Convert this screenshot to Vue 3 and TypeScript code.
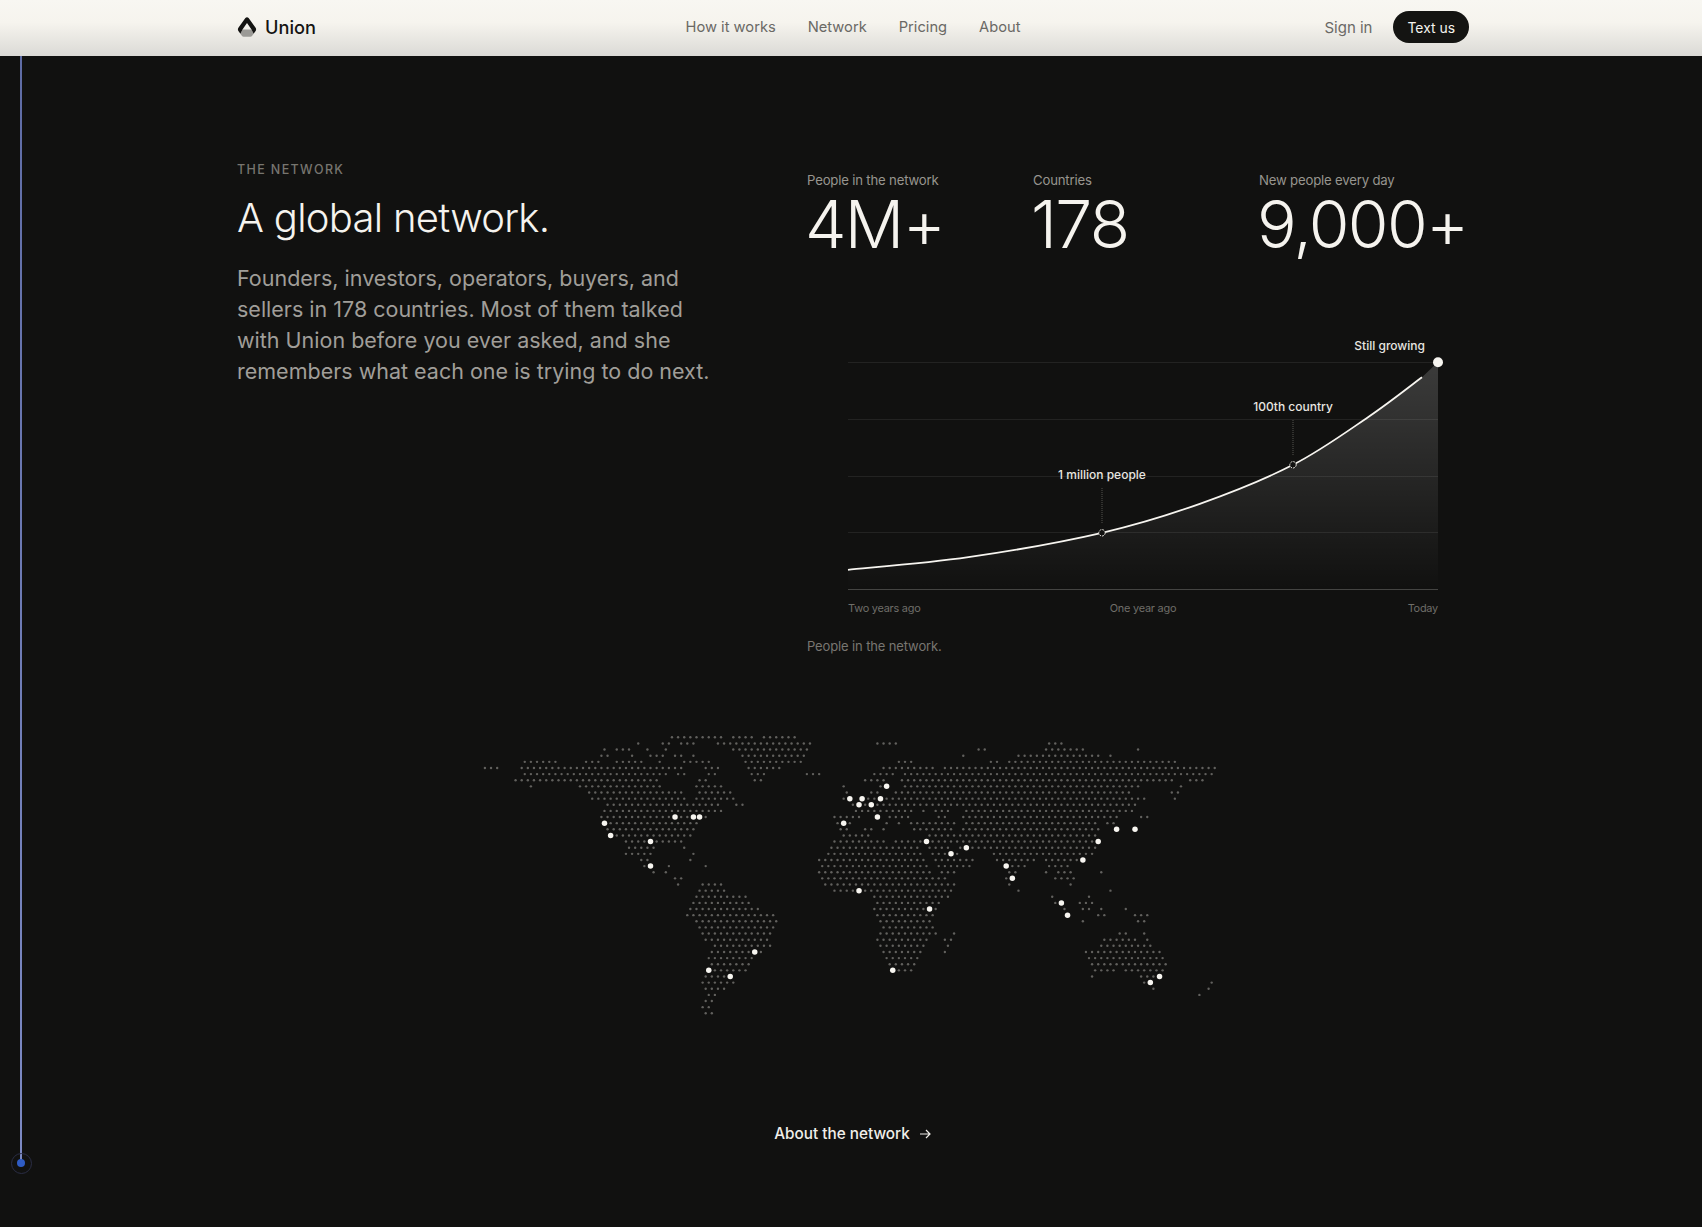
<script setup lang="ts">
const SP = 6.133
const X0 = 521.7
const Y0 = 737.3

type Run = number | [number, number]

// Land outline: runs of dots per grid row, measured in two overlapping strips.
const west: Run[][] = [
  [[605, 755], [788, 845], [880, 975]],
  [505, [578, 597], [633, 670], [745, 1020]],
  [403, [440, 477], 532, 587, [790, 1010]],
  [[393, 412], 487, [540, 578], [615, 633], 670, [815, 1005]],
  [[165, 257], [347, 385], [440, 513], 570, [642, 715], [825, 993]],
  [[45, 82], [155, 632], [706, 743], [835, 928]],
  [[165, 587], [625, 642], [715, 735], [845, 880]],
  [[137, 560], [688, 706], [853, 872]],
  [183, [330, 570], [680, 752]],
  [[357, 632], [680, 780]],
  [[365, 642], [680, 790]],
  [[412, 743], [797, 818]],
  [[403, 752]],
  [[393, 706]],
  [[403, 680]],
  [[412, 670]],
  [[422, 660]],
  [[467, 633]],
  [[477, 550], 642],
  [[467, 540], 670],
  [[513, 532], 660],
  [[523, 541], 597, 706],
  [550, 587],
  [[615, 633]],
  [625, [697, 752]],
  [[688, 770]],
  [[680, 825]],
  [[670, 835]],
  [[660, 862]],
  [[652, 910]],
  [[680, 920]],
  [[688, 910]],
  [[697, 900]],
  [[706, 890]],
  [[733, 900]],
  [[725, 872]],
  [[715, 845]],
  [[725, 835]],
  [[715, 825]],
  [[706, 780]],
  [[697, 790]],
  [[706, 762]],
  [[715, 735]],
  [[706, 725]],
  [[697, 715]],
  [[706, 725]],
]

const east: Run[][] = [
  [],
  [[12, 30], [232, 287], [748, 785]],
  [[0, 20], [535, 553], [738, 850], 1015],
  [12, 490, [655, 895], 932],
  [3, [297, 333], [572, 590], [628, 1125]],
  [[250, 397], [435, 1245]],
  [[20, 57], [223, 280], [315, 1235]],
  [[195, 250], [305, 1115], [1170, 1207]],
  [130, [242, 260], [315, 1015], 1143],
  [140, [213, 232], [287, 988], [1115, 1133]],
  [[130, 150], 186, [205, 1033], 1125],
  [[160, 1005]],
  [[168, 335], 370, [408, 445], [500, 995]],
  [[103, 177], 232, [270, 325], [415, 435], [490, 950], [1022, 1040]],
  [[112, 150], 260, 297, [335, 463], [500, 885], [922, 940]],
  [[122, 140], [195, 213], 250, [342, 460], [490, 895], 950, 1005],
  [[130, 205], [390, 890]],
  [[103, 250], [287, 380], [400, 895]],
  [[93, 352], [390, 445], [480, 885]],
  [[85, 362], [400, 472], [583, 880]],
  [[57, 370], [408, 518], [590, 705], [740, 850]],
  [[67, 380], [415, 510], [620, 675], [748, 805]],
  [[57, 390], [425, 462], [630, 648], 738, [775, 805], 905],
  [[67, 435], [620, 638], [767, 822]],
  [[75, 462], 630, 812],
  [[103, 455], 655, 932],
  [[223, 445], 757, 868],
  [[232, 418], [767, 785], [840, 877]],
  [[223, 410], 795, [850, 868], 905, 978],
  [[232, 400], 803, [895, 913], [1005, 1042]],
  [[240, 390], 850, [1015, 1033]],
  [[250, 400]],
  [[240, 408], 462, [960, 978], 1033],
  [[232, 380], [435, 453], [913, 1005], 1042],
  [[240, 372], 445, [905, 1050]],
  [[250, 362], 435, [858, 1080]],
  [[260, 353], [868, 1088]],
  [[268, 345], [877, 1098]],
  [[278, 335], [887, 942], [978, 1088]],
  [877, [1023, 1078]],
  [[1033, 1050], 1235],
  [1060, 1225],
  [1198],
]

const westHubs: [number, number][] = [
  [13, 615], [13, 670], [13, 688], [14, 403], [16, 422], [17, 541], [21, 541],
  [35, 853], [38, 716], [39, 780],
]
const eastHubs: [number, number][] = [
  [8, 260], [10, 150], [10, 186], [10, 241], [11, 177], [11, 213], [13, 232], [14, 131],
  [15, 950], [15, 1005], [17, 379], [17, 895], [18, 499], [19, 453], [20, 849], [21, 619],
  [23, 637], [25, 177], [27, 785], [28, 388], [29, 803], [38, 278], [39, 1078], [40, 1050],
]

const fromWest = (z: number) => 470 + z / 3
const fromEast = (z: number) => 800 + z / 3
const colOf = (x: number, r: number) => Math.round((x - X0) / SP - (r % 2 === 0 ? 0.5 : 0))
const xOf = (c: number, r: number) => X0 + SP * (c + (r % 2 === 0 ? 0.5 : 0))
const yOf = (r: number) => Y0 + SP * r

const seen = new Set<string>()
const dots: { x: number; y: number }[] = []
function addRuns(rows: Run[][], conv: (z: number) => number) {
  rows.forEach((runs, r) => {
    for (const run of runs) {
      const [a, b] = typeof run === 'number' ? [run, run] : run
      const c0 = colOf(conv(a), r)
      const c1 = colOf(conv(b), r)
      for (let c = c0; c <= c1; c++) {
        const k = `${r}:${c}`
        if (!seen.has(k)) {
          seen.add(k)
          dots.push({ x: xOf(c, r), y: yOf(r) })
        }
      }
    }
  })
}
addRuns(west, fromWest)
addRuns(east, fromEast)

const hubs = [
  ...westHubs.map(([r, z]) => ({ x: xOf(colOf(fromWest(z), r), r), y: yOf(r) })),
  ...eastHubs.map(([r, z]) => ({ x: xOf(colOf(fromEast(z), r), r), y: yOf(r) })),
]

// Growth curve, in page-relative chart coordinates.
const curve: [number, number][] = [
  [41, 255.8], [161.4, 243.2], [295, 218.8], [392.8, 189.8], [486, 150.8], [561, 103.2], [615, 63.2],
]
function smooth(pts: [number, number][]) {
  let d = `M${pts[0][0]} ${pts[0][1]}`
  for (let i = 0; i < pts.length - 1; i++) {
    const p0 = pts[Math.max(0, i - 1)]
    const p1 = pts[i]
    const p2 = pts[i + 1]
    const p3 = pts[Math.min(pts.length - 1, i + 2)]
    const c1x = p1[0] + (p2[0] - p0[0]) / 6
    const c1y = p1[1] + (p2[1] - p0[1]) / 6
    const c2x = p2[0] - (p3[0] - p1[0]) / 6
    const c2y = p2[1] - (p3[1] - p1[1]) / 6
    d += ` C${c1x.toFixed(1)} ${c1y.toFixed(1)} ${c2x.toFixed(1)} ${c2y.toFixed(1)} ${p2[0]} ${p2[1]}`
  }
  return d
}
const linePath = smooth(curve)
const areaPath = `${linePath} L631 48 L631 275.5 L41 275.5 Z`
const gridLines = [48.5, 105.5, 162.5, 218.5]
const stats = [
  { label: 'People in the network', value: '4M+' },
  { label: 'Countries', value: '178' },
  { label: 'New people every day', value: '9,000+' },
]
const links = ['How it works', 'Network', 'Pricing', 'About']
</script>

<template>
  <div class="page">
    <span class="rail" aria-hidden="true"><span class="rail-dot"></span></span>
    <header class="nav">
      <div class="nav-inner">
        <a class="brand">
          <svg class="logo" viewBox="0 0 20 20" width="20" height="20" aria-hidden="true">
            <path d="M5.500 12.500H14.500L16.600 16.800L15 19Q14.400 19.800 13.500 19.800H6.500Q5.600 19.800 5 19L3.400 16.800Z" fill="#9b9a96" />
            <path d="M8.400 1Q10 -.3 11.600 1L18.600 10.800Q19.600 12.400 18.600 14L16.600 16.800L14.500 12.500L10 6L5.500 12.500L3.400 16.800L1.400 14Q.4 12.400 1.400 10.800Z" fill="#141412" />
          </svg>
          <span>Union</span>
        </a>
        <nav class="links">
          <a v-for="l in links" :key="l">{{ l }}</a>
        </nav>
        <div class="actions">
          <a class="signin">Sign in</a>
          <a class="cta-pill">Text us</a>
        </div>
      </div>
    </header>

    <main class="main">
      <section class="split">
        <div class="intro">
          <p class="eyebrow">THE NETWORK</p>
          <h1>A global network.</h1>
          <p class="lede">Founders, investors, operators, buyers, and sellers in 178 countries. Most of them talked with Union before you ever asked, and she remembers what each one is trying to do next.</p>
        </div>
        <div class="data">
          <div class="stats">
            <div v-for="s in stats" :key="s.label" class="stat">
              <div class="stat-label">{{ s.label }}</div>
              <div class="stat-value">{{ s.value }}</div>
            </div>
          </div>
          <svg class="chart" viewBox="0 0 662 305" width="662" height="305">
            <defs>
              <linearGradient id="area" x1="0" y1="48" x2="0" y2="275" gradientUnits="userSpaceOnUse">
                <stop offset="0" stop-color="#fff" stop-opacity="0.18" />
                <stop offset="1" stop-color="#fff" stop-opacity="0" />
              </linearGradient>
            </defs>
            <line v-for="g in gridLines" :key="g" x1="41" x2="631" :y1="g" :y2="g" class="grid" />
            <path :d="areaPath" fill="url(#area)" />
            <line x1="41" x2="631" y1="275.500" y2="275.500" class="axis" />
            <path :d="linePath" class="line" />
            <line x1="295" x2="295" y1="174" y2="210" class="lead" />
            <line x1="486" x2="486" y1="106" y2="141" class="lead" />
            <circle cx="295" cy="218.800" r="3.200" class="pt" />
            <circle cx="486" cy="150.800" r="3.200" class="pt" />
            <circle cx="631" cy="48.300" r="5" fill="#f7f5f0" />
            <text x="295" y="165" text-anchor="middle" class="note">1 million people</text>
            <text x="486" y="97" text-anchor="middle" class="note">100th country</text>
            <text x="618" y="36" text-anchor="end" class="note">Still growing</text>
            <text x="41" y="297.500" class="tick">Two years ago</text>
            <text x="336" y="297.500" text-anchor="middle" class="tick">One year ago</text>
            <text x="631" y="297.500" text-anchor="end" class="tick">Today</text>
          </svg>
          <p class="caption">People in the network.</p>
        </div>
      </section>

      <svg class="map" viewBox="473 725 760 305" width="760" height="305" aria-hidden="true">
        <circle v-for="(d, i) in dots" :key="i" :cx="d.x" :cy="d.y" r="1.200" fill="#62615e" />
        <circle v-for="(h, i) in hubs" :key="'h' + i" :cx="h.x" :cy="h.y" r="2.750" fill="#f7f5f0" />
      </svg>

      <a class="about">
        <span>About the network</span>
        <svg viewBox="0 0 14 14" width="14" height="14" fill="none" stroke="currentColor" stroke-width="1.200" aria-hidden="true">
          <path d="M2 7h10M8 3l4 4-4 4" />
        </svg>
      </a>
    </main>
  </div>
</template>

<style>
html, body { margin: 0; background: #111110; }
</style>

<style scoped>
.page {
  position: relative;
  min-height: 1227px;
  background: #111110;
  font-family: Inter, "Liberation Sans", sans-serif;
  color: #f5f3ee;
  overflow: hidden;
}
a { text-decoration: none; }
.rail {
  position: absolute;
  left: 20px;
  top: 56px;
  width: 2px;
  height: 1107px;
  background: linear-gradient(#5f6ca5, #7d8ac4);
}
.rail-dot {
  position: absolute;
  left: -3px;
  bottom: -4px;
  width: 8px;
  height: 8px;
  border-radius: 50%;
  background: #2f5cc4;
}
.rail-dot::after {
  content: "";
  position: absolute;
  inset: -6.5px;
  border: 1px solid #2a2d45;
  border-radius: 50%;
}
.nav {
  height: 56px;
  background: linear-gradient(#f8f7f2 0%, #f6f4ee 40%, #dbdad6 100%);
}
.nav-inner {
  width: 1232px;
  height: 100%;
  box-sizing: border-box;
  padding-bottom: 2px;
  margin-left: 237px;
  display: grid;
  grid-template-columns: 1fr auto 1fr;
  align-items: center;
}
.brand {
  display: flex;
  align-items: center;
  gap: 8px;
  color: #141412;
  font-size: 18.200px;
  font-weight: 550;
}
.logo { display: block; }
.links {
  display: flex;
  gap: 32px;
  font-size: 14.700px;
  color: #6a6965;
}
.actions {
  display: flex;
  justify-content: flex-end;
  align-items: center;
  gap: 21px;
  font-size: 15px;
}
.signin { color: #6a6965; }
.cta-pill {
  background: #141412;
  color: #f5f3ee;
  height: 32px;
  line-height: 34px;
  padding: 0 14px;
  border-radius: 16px;
  font-size: 13.900px;
}
.main {
  width: 1232px;
  margin-left: 237px;
  display: flex;
  flex-direction: column;
  align-items: center;
}
.split {
  width: 100%;
  display: grid;
  grid-template-columns: 570px 662px;
  padding-top: 105px;
}
.eyebrow {
  margin: 0;
  font-size: 12.500px;
  line-height: 18px;
  letter-spacing: 0.11em;
  color: #77756f;
  font-weight: 500;
}
h1 {
  margin: 14px 0 0;
  font-size: 40px;
  line-height: 50px;
  font-weight: 350;
  letter-spacing: -0.018em;
  color: #f5f3ee;
}
.lede {
  margin: 20px 0 0;
  width: 490px;
  font-size: 21.500px;
  line-height: 31px;
  color: #a09e99;
}
.data { padding-top: 9px; }
.stats {
  display: grid;
  grid-template-columns: repeat(3, 226px);
  width: 678px;
}
.stat-label {
  font-size: 13.200px;
  line-height: 20px;
  letter-spacing: -0.015em;
  color: #97958f;
}
.stat-value {
  margin-left: -2px;
  font-size: 66px;
  line-height: 68px;
  letter-spacing: -0.025em;
  color: #f5f3ee;
  font-weight: 300;
}
.chart {
  display: block;
  margin-top: 56px;
}
.grid { stroke: #232322; stroke-width: 1; }
.axis { stroke: #444442; stroke-width: 1; }
.line { fill: none; stroke: #f7f5f0; stroke-width: 1.800; }
.lead { stroke: #55544f; stroke-width: 1; stroke-dasharray: 1 1; }
.pt { fill: #111110; stroke: #e8e6e0; stroke-width: 1; stroke-dasharray: 2 1; }
.note { font-size: 12px; font-weight: 550; fill: #e8e6e0; }
.tick { font-size: 10.900px; letter-spacing: -0.02em; fill: #6f6e69; }
.caption {
  margin: 17px 0 0;
  font-size: 13px;
  line-height: 20px;
  letter-spacing: -0.01em;
  color: #787671;
}
.map {
  display: block;
  flex: none;
  margin-top: 69px;
}
.about {
  display: flex;
  align-items: center;
  gap: 8px;
  margin-top: 92px;
  font-size: 15.300px;
  font-weight: 550;
  color: #f0eee9;
  line-height: 24px;
}
</style>
